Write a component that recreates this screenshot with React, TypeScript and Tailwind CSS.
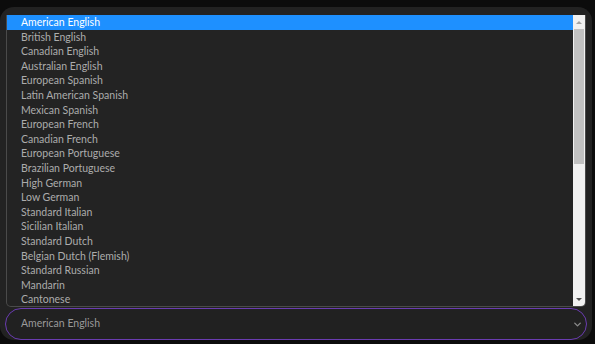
import { ChevronDown } from 'lucide-react';

const languages = [
  'American English',
  'British English',
  'Canadian English',
  'Australian English',
  'European Spanish',
  'Latin American Spanish',
  'Mexican Spanish',
  'European French',
  'Canadian French',
  'European Portuguese',
  'Brazilian Portuguese',
  'High German',
  'Low German',
  'Standard Italian',
  'Sicilian Italian',
  'Standard Dutch',
  'Belgian Dutch (Flemish)',
  'Standard Russian',
  'Mandarin',
  'Cantonese',
];

export default function App() {
  return (
    <div className="w-[595px] h-[344px] bg-[#0c0c0c] pt-[7px] pr-[3px] pb-[4px] overflow-hidden" style={{ fontFamily: 'Lato, "Noto Sans", sans-serif' }}>
      <div className="h-full bg-[#222222] rounded-[14px] pl-[5px] pr-[5px] pt-[8px] flex flex-col">
        {/* open dropdown list */}
        <div className="h-[292px] mx-[1px] bg-[#232323] border border-[#4a4a4a] border-t-0 rounded-b-[5px] flex overflow-hidden">
          <ul className="flex-1 flex flex-col">
            {languages.map((lang, i) => (
              <li
                key={lang}
                className={`h-[14.6px] leading-[14.6px] pl-[14px] text-[10.5px] ${i === 0 ? 'bg-[#1e90ff] text-white' : 'text-[#acacac]'}`}
              >
                {lang}
              </li>
            ))}
          </ul>
          {/* scrollbar */}
          <div className="w-[12px] bg-[#f1f1f1] flex flex-col items-center">
            <div className="h-[14px] flex items-center justify-center">
              <div className="w-0 h-0 border-l-[3px] border-r-[3px] border-b-[3px] border-l-transparent border-r-transparent border-b-[#a3a3a3]" />
            </div>
            <div className="w-[10px] h-[135px] bg-[#c1c1c1]" />
            <div className="flex-1" />
            <div className="h-[14px] flex items-center justify-center">
              <div className="w-0 h-0 border-l-[3px] border-r-[3px] border-t-[3px] border-l-transparent border-r-transparent border-t-[#505050]" />
            </div>
          </div>
        </div>
        {/* select */}
        <div className="mt-[1px] h-[32px] border border-[#6a3cb0] rounded-full bg-[#212121] flex items-center justify-between pl-[15px] pr-[3px]">
          <span className="text-[10.5px] text-[#9a9a9a]">American English</span>
          <ChevronDown className="w-[11px] h-[11px] text-[#8a8a8a]" strokeWidth={3} />
        </div>
      </div>
    </div>
  );
}
